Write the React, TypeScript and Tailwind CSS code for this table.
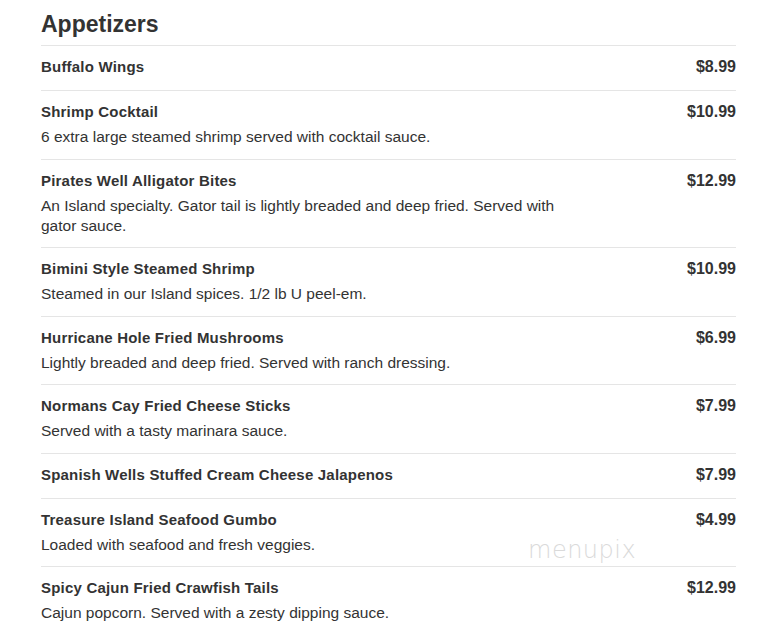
const items = [
  { name: "Buffalo Wings", price: "$8.99" },
  { name: "Shrimp Cocktail", price: "$10.99", desc: "6 extra large steamed shrimp served with cocktail sauce." },
  {
    name: "Pirates Well Alligator Bites",
    price: "$12.99",
    desc: "An Island specialty. Gator tail is lightly breaded and deep fried. Served with gator sauce.",
  },
  { name: "Bimini Style Steamed Shrimp", price: "$10.99", desc: "Steamed in our Island spices. 1/2 lb U peel-em." },
  { name: "Hurricane Hole Fried Mushrooms", price: "$6.99", desc: "Lightly breaded and deep fried. Served with ranch dressing." },
  { name: "Normans Cay Fried Cheese Sticks", price: "$7.99", desc: "Served with a tasty marinara sauce." },
  { name: "Spanish Wells Stuffed Cream Cheese Jalapenos", price: "$7.99" },
  { name: "Treasure Island Seafood Gumbo", price: "$4.99", desc: "Loaded with seafood and fresh veggies." },
  { name: "Spicy Cajun Fried Crawfish Tails", price: "$12.99", desc: "Cajun popcorn. Served with a zesty dipping sauce." },
];

export default function App() {
  return (
    <div className="min-h-screen bg-white font-['Liberation_Sans',Arial,sans-serif] text-[#333]">
      <div className="relative ml-[41px] w-[695px]">
        <h2 className="pt-[9px] pb-[6px] text-[23px] leading-[30px] font-bold text-[#333]">Appetizers</h2>
        {items.map((item) => (
          <div
            key={item.name}
            className={`flex justify-between border-t border-[#e5e5e5] pt-[11px] ${item.desc ? "pb-[11.5px]" : "pb-[13px]"}`}
          >
            <div className="w-[525px]">
              <div className="text-[15px] leading-[20px] font-bold tracking-[0.2px]">{item.name}</div>
              {item.desc && <div className="mt-[5px] text-[15.5px] leading-[20px]">{item.desc}</div>}
            </div>
            <div className="text-[16px] leading-[20px] font-bold">{item.price}</div>
          </div>
        ))}
        <div className="absolute left-[487px] top-[538px] text-[24px] leading-none tracking-[0.5px] text-[#dadada] font-['DejaVu_Sans',sans-serif] font-extralight">
          menupix
        </div>
      </div>
    </div>
  );
}
